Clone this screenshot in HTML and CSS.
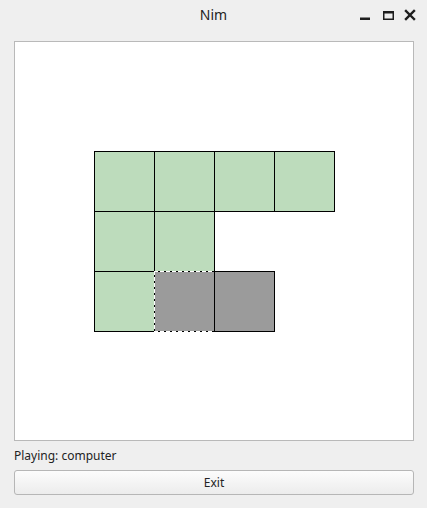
FILE: index.html
```html
<!DOCTYPE html>
<html>
<head>
<meta charset="utf-8">
<title>Nim</title>
<link rel="stylesheet" href="styles.css">
</head>
<body>
<div class="window">
  <header class="titlebar">
    <div class="tb-side"></div>
    <div class="tb-title">Nim</div>
    <div class="tb-side tb-controls">
      <svg class="tb-icons" width="58" height="30" viewBox="0 0 58 30">
        <rect x="2" y="17.5" width="10" height="2.5" fill="#1e1e1e"/>
        <rect x="25.75" y="11.75" width="9.5" height="7.5" fill="none" stroke="#1e1e1e" stroke-width="1.5"/>
        <rect x="25" y="11" width="11" height="2.5" fill="#1e1e1e"/>
        <path d="M48 11 L56 19 M56 11 L48 19" stroke="#1e1e1e" stroke-width="2.4" stroke-linecap="square"/>
      </svg>
    </div>
  </header>
  <main class="content">
    <div class="board">
      <div class="grid">
        <div class="cell green"></div>
        <div class="cell green"></div>
        <div class="cell green"></div>
        <div class="cell green"></div>
        <div class="cell green"></div>
        <div class="cell green"></div>
        <div class="cell empty"></div>
        <div class="cell empty"></div>
        <div class="cell green"></div>
        <div class="cell gray selected">
          <svg class="dash" width="61" height="61" viewBox="0 0 61 61"><path d="M0.5 0 V61 M0 0.5 H60 M0 60.5 H60" stroke="#ffffff" stroke-width="1" stroke-dasharray="4 2" fill="none"/></svg>
        </div>
        <div class="cell gray"></div>
      </div>
    </div>
    <div class="status">Playing: computer</div>
    <button class="exit">Exit</button>
  </main>
</div>
</body>
</html>
```
FILE: styles.css
```css
html, body {
  margin: 0;
  padding: 0;
}
body {
  background: #efefef;
  font-family: "Noto Sans", "Open Sans", sans-serif;
  color: #232323;
  width: 427px;
  height: 508px;
  overflow: hidden;
}
.titlebar {
  height: 30px;
  display: grid;
  grid-template-columns: 1fr auto 1fr;
  align-items: center;
}
.tb-title {
  font-size: 14px;
  line-height: 30px;
}
.tb-controls {
  display: flex;
  justify-content: flex-end;
  align-self: stretch;
  padding-right: 11px;
}
.tb-icons {
  display: block;
}
.content {
  padding: 11px 14px 0 14px;
}
.board {
  width: 400px;
  height: 400px;
  box-sizing: border-box;
  border: 1px solid #b9b9b9;
  background: #ffffff;
  padding: 109px 0 0 79px;
}
.grid {
  display: grid;
  grid-template-columns: repeat(4, 60px);
  grid-template-rows: repeat(3, 60px);
}
.cell {
  width: 61px;
  height: 61px;
  box-sizing: border-box;
  border: 1px solid #000;
}
.cell.empty {
  border: none;
}
.green {
  background: #bddcbc;
}
.gray {
  background: #9b9b9b;
}
.selected {
  position: relative;
}
.dash {
  position: absolute;
  left: -1px;
  top: -1px;
  display: block;
}
.status {
  font-size: 12px;
  line-height: 16px;
  margin-top: 7px;
  height: 22px;
}
.exit {
  display: block;
  width: 400px;
  height: 25px;
  box-sizing: border-box;
  border: 1px solid #b6b6b6;
  border-radius: 3px;
  background: linear-gradient(#fcfcfc, #ececec);
  font-family: "Noto Sans", "Open Sans", sans-serif;
  font-size: 12px;
  color: #232323;
  padding: 0;
}
```
